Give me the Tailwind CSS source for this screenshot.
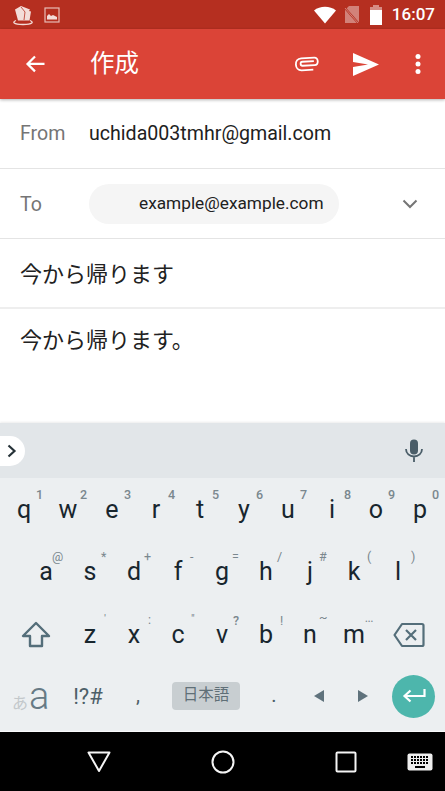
<!DOCTYPE html>
<html lang="ja">
  <head>
    <meta charset="UTF-8" />
    <meta name="viewport" content="width=device-width, initial-scale=1.0" />
    <title>作成</title>
    <script src="https://cdn.jsdelivr.net/npm/@tailwindcss/browser@4"></script>
  </head>
  <body class="overflow-hidden">
    <div class="w-[445px] h-[791px] flex flex-col bg-white font-['Roboto','Noto_Sans_CJK_JP',sans-serif]">
      <!-- status bar -->
      <div class="h-[29px] shrink-0 bg-[#b52f20] flex items-center pl-3 pr-[10px] text-white">
        <svg width="22" height="22" viewBox="0 0 22 22" class="mt-[1px]">
          <path d="M3 5.500L9 2l9 3.500-1 1.500 2 .5-1.500 9H6z" fill="#f3ddd9" />
          <path d="M9 3l4 5-1 8" fill="none" stroke="#b52f20" stroke-width="0.800" />
          <path d="M4 16.500C0 18 1 20.500 11 20.500S22 18 18 16.500" fill="none" stroke="#f3ddd9" stroke-width="1.300" />
        </svg>
        <svg width="16" height="16" viewBox="0 0 16 16" class="ml-[10px]">
          <rect x="1" y="1" width="14" height="14" fill="none" stroke="#e8bdb6" stroke-width="1.200" />
          <path d="M3 12.500V9l2-2 2 2 2-1 2 1 2 1v2.500z" fill="#f3ddd9" />
        </svg>
        <svg width="22" height="18" viewBox="0 0 22 18" class="ml-auto">
          <path d="M0 4.500C6 -0.500 16 -0.500 22 4.500L11 17.500z" fill="#fff" />
        </svg>
        <svg width="16" height="20" viewBox="0 0 16 20" class="ml-[8px]">
          <path d="M5 1h10v17H1V5z" fill="#fff" fill-opacity="0.4" />
          <path d="M0 2l15 17" stroke="#b52f20" stroke-width="2" />
          <path d="M1 3l13 15" stroke="#fff" stroke-opacity="0.4" stroke-width="1" />
        </svg>
        <svg width="14" height="20" viewBox="0 0 14 20" class="ml-[9px]">
          <path d="M4 0h6v2h3v3H1V2h3z" fill="#fff" fill-opacity="0.45" />
          <rect x="1" y="5" width="12" height="15" fill="#fff" />
        </svg>
        <span class="ml-[9px] text-[17px] font-medium leading-none">16:07</span>
      </div>

      <!-- toolbar -->
      <div class="h-[70px] shrink-0 bg-[#db4437] flex items-center text-white shadow-[0_1px_3px_rgba(0,0,0,0.3)] relative">
        <svg width="24" height="24" viewBox="0 0 24 24" class="ml-[23px]">
          <path d="M21.500 11.900H4.500M12 4.500L4.500 11.900l7.500 7.500" fill="none" stroke="#fff" stroke-width="2.200" />
        </svg>
        <span class="ml-[43px] text-[24.500px] leading-none mt-[1px]">作成</span>
        <svg width="26" height="16" viewBox="0 0 26 16" class="ml-auto">
          <path d="M20 5.500H8.500C6 5.500 6 9.500 8.500 9.500H20.500C25 9.500 25 2 20.500 2H7.500C0 2 0 14 7.500 14H19" fill="none" stroke="#fff" stroke-width="1.800" transform="rotate(-3 13 8)" />
        </svg>
        <svg width="26" height="23" viewBox="0 0 26 23" class="ml-[33px]">
          <path d="M0 0l26 11.500L0 23v-9l15-2.500L0 9z" fill="#fff" />
        </svg>
        <svg width="8" height="22" viewBox="0 0 8 22" class="ml-[35px] mr-[23px]">
          <circle cx="4" cy="3.500" r="2.500" fill="#fff" />
          <circle cx="4" cy="11" r="2.500" fill="#fff" />
          <circle cx="4" cy="18.500" r="2.500" fill="#fff" />
        </svg>
      </div>

      <!-- form -->
      <div class="h-[70px] shrink-0 flex items-center pt-[1px] border-b border-[#e4e4e4]">
        <span class="w-[89px] pl-5 text-[19.600px] text-[#757575]">From</span>
        <span class="text-[19.600px] text-[#212121]">uchida003tmhr@gmail.com</span>
      </div>
      <div class="h-[70px] shrink-0 flex items-center border-b border-[#e4e4e4]">
        <span class="w-[89px] pl-5 text-[19.600px] text-[#757575] mt-[2px]">To</span>
        <div class="w-[250px] h-10 rounded-full bg-[#f5f5f5] flex items-center pl-[50px] text-[17.250px] text-[#212121]">example@example.com</div>
        <svg width="16" height="10" viewBox="0 0 16 10" class="ml-[63px]">
          <path d="M1.500 1.500L8 8l6.500-6.500" fill="none" stroke="#757575" stroke-width="2" />
        </svg>
      </div>
      <div class="h-[70px] shrink-0 flex items-center pl-5 pt-[2px] text-[22px] text-[#212121] border-b-2 border-[#eeeeee]">今から帰ります</div>
      <div class="h-[114px] shrink-0 pl-5 pt-[16px] text-[22px] leading-[32px] text-[#212121]">今から帰ります。</div>

      <!-- keyboard -->
      <div class="h-[55px] shrink-0 bg-[#e2e6e9] flex items-center justify-between shadow-[0_-1px_2px_rgba(0,0,0,0.08)]">
        <div class="w-[25px] h-[30px] bg-white rounded-r-[15px] flex items-center justify-center">
          <svg width="10" height="14" viewBox="0 0 10 14" class="mr-[1px]">
            <path d="M1.500 1.500L7.500 7l-6 5.500" fill="none" stroke="#263238" stroke-width="2.200" />
          </svg>
        </div>
        <svg width="18" height="24" viewBox="0 0 18 24" class="mr-[22px]">
          <rect x="5" y="0.500" width="8" height="15" rx="4" fill="#4a5d68" />
          <path d="M1 10c0 4.500 3.500 7.500 8 7.500s8-3 8-7.500M9 17.500V23" fill="none" stroke="#4a5d68" stroke-width="1.800" />
        </svg>
      </div>
      <div class="flex-1 bg-[#eceff1] border-b border-white/70 flex flex-col text-[#18262e] text-[25px]">
        <div class="h-[63px] grid grid-cols-[repeat(10,44px)] pl-[2px] items-center">
          <div class="relative text-center">q<span class="absolute left-[34px] -top-[5px] text-[12.500px] font-medium text-[#7a878e]">1</span></div>
          <div class="relative text-center">w<span class="absolute left-[34px] -top-[5px] text-[12.500px] font-medium text-[#7a878e]">2</span></div>
          <div class="relative text-center">e<span class="absolute left-[34px] -top-[5px] text-[12.500px] font-medium text-[#7a878e]">3</span></div>
          <div class="relative text-center">r<span class="absolute left-[34px] -top-[5px] text-[12.500px] font-medium text-[#7a878e]">4</span></div>
          <div class="relative text-center">t<span class="absolute left-[34px] -top-[5px] text-[12.500px] font-medium text-[#7a878e]">5</span></div>
          <div class="relative text-center">y<span class="absolute left-[34px] -top-[5px] text-[12.500px] font-medium text-[#7a878e]">6</span></div>
          <div class="relative text-center">u<span class="absolute left-[34px] -top-[5px] text-[12.500px] font-medium text-[#7a878e]">7</span></div>
          <div class="relative text-center">i<span class="absolute left-[34px] -top-[5px] text-[12.500px] font-medium text-[#7a878e]">8</span></div>
          <div class="relative text-center">o<span class="absolute left-[34px] -top-[5px] text-[12.500px] font-medium text-[#7a878e]">9</span></div>
          <div class="relative text-center">p<span class="absolute left-[34px] -top-[5px] text-[12.500px] font-medium text-[#7a878e]">0</span></div>
        </div>
        <div class="h-[62px] grid grid-cols-[repeat(9,44px)] pl-[24px] items-center">
          <div class="relative text-center">a<span class="absolute left-[28px] -top-[5px] text-[12.500px] text-[#7a878e]">@</span></div>
          <div class="relative text-center">s<span class="absolute left-[33px] -top-[5px] text-[12.500px] text-[#7a878e]">*</span></div>
          <div class="relative text-center">d<span class="absolute left-[32px] -top-[5px] text-[12.500px] text-[#7a878e]">+</span></div>
          <div class="relative text-center">f<span class="absolute left-[34px] -top-[5px] text-[12.500px] text-[#7a878e]">-</span></div>
          <div class="relative text-center">g<span class="absolute left-[32px] -top-[5px] text-[12.500px] text-[#7a878e]">=</span></div>
          <div class="relative text-center">h<span class="absolute left-[33px] -top-[5px] text-[12.500px] text-[#7a878e]">/</span></div>
          <div class="relative text-center">j<span class="absolute left-[31px] -top-[5px] text-[12.500px] text-[#7a878e]">#</span></div>
          <div class="relative text-center">k<span class="absolute left-[35px] -top-[5px] text-[12.500px] text-[#7a878e]">(</span></div>
          <div class="relative text-center">l<span class="absolute left-[35px] -top-[5px] text-[12.500px] text-[#7a878e]">)</span></div>
        </div>
        <div class="h-[64px] flex items-center">
          <div class="w-[68px] flex justify-center pl-1">
            <svg width="30" height="28" viewBox="0 0 30 28">
              <path d="M15 2L2 15h7v10h12V15h7z" fill="none" stroke="#546e7a" stroke-width="2.400" stroke-linejoin="round" />
            </svg>
          </div>
          <div class="grid grid-cols-[repeat(7,44px)]">
            <div class="relative text-center">z<span class="absolute left-[36px] -top-[6px] text-[11.500px] text-[#7a878e]">'</span></div>
            <div class="relative text-center">x<span class="absolute left-[36px] -top-[5px] text-[12.500px] text-[#7a878e]">:</span></div>
            <div class="relative text-center">c<span class="absolute left-[35px] -top-[6px] text-[11.500px] text-[#7a878e]">"</span></div>
            <div class="relative text-center">v<span class="absolute left-[33px] -top-[4px] text-[12.500px] font-medium text-[#7a878e]">?</span></div>
            <div class="relative text-center">b<span class="absolute left-[36px] -top-[4px] text-[12.500px] text-[#7a878e]">!</span></div>
            <div class="relative text-center">n<span class="absolute left-[31px] -top-[4px] text-[12.500px] leading-none text-[#7a878e]">~</span></div>
            <div class="relative text-center">m<span class="absolute left-[33px] -top-[2px] text-[10px] leading-none font-medium text-[#7a878e]">...</span></div>
          </div>
          <div class="w-[69px] flex justify-center pr-[3px]">
            <svg width="32" height="26" viewBox="0 0 32 26">
              <path d="M9 2h20a1.500 1.500 0 0 1 1.500 1.500v19A1.500 1.500 0 0 1 29 24H9L1.500 13z" fill="none" stroke="#546e7a" stroke-width="2.200" stroke-linejoin="round" />
              <path d="M13 8l10 10M23 8L13 18" fill="none" stroke="#546e7a" stroke-width="2.200" />
            </svg>
          </div>
        </div>
        <div class="h-[58px] flex items-center text-[#546e7a]">
          <div class="w-[62px] pl-3 flex items-baseline">
            <span class="text-[16px] text-[#c3c8cb]">あ</span>
            <span class="text-[38px] ml-[1px] font-light leading-none text-[#667a85]">a</span>
          </div>
          <div class="w-[44px] ml-[4px] text-center text-[22px] text-[#4d5f68]">!?#</div>
          <div class="w-[44px] ml-[6px] text-center text-[20px] text-[#4d5f68] -mt-[2px]">,</div>
          <div class="w-[68px] h-[28px] ml-[12px] rounded-[4px] bg-[#c8ced1] flex items-center justify-center text-[15.500px] text-[#5f6f77]">日本語</div>
          <div class="w-[44px] ml-[12px] text-center text-[20px] text-[#4d5f68] -mt-[2px]">.</div>
          <svg width="10" height="12" viewBox="0 0 10 12" class="ml-[18px]"><path d="M10 0v12L0 6z" fill="#5f727c" /></svg>
          <svg width="10" height="12" viewBox="0 0 10 12" class="ml-[34px]"><path d="M0 0v12l10-6z" fill="#5f727c" /></svg>
          <div class="w-[43px] h-[43px] ml-[24px] rounded-full bg-[#4db6ac] flex items-center justify-center">
            <svg width="24" height="16" viewBox="0 0 24 16">
              <path d="M22.500 1v7H3M8.500 2.500L2.500 8l6 5.500" fill="none" stroke="#fff" stroke-width="2.200" />
            </svg>
          </div>
        </div>
      </div>

      <!-- nav bar -->
      <div class="h-[59px] shrink-0 bg-black flex items-center">
        <svg width="24" height="22" viewBox="0 0 24 22" class="ml-[87px]">
          <path d="M1.500 1.500h21L12 20z" fill="none" stroke="#f5f5f5" stroke-width="2" stroke-linejoin="round" />
        </svg>
        <svg width="24" height="24" viewBox="0 0 24 24" class="ml-[100px]">
          <circle cx="12" cy="12" r="10.500" fill="none" stroke="#f5f5f5" stroke-width="2" />
        </svg>
        <svg width="22" height="22" viewBox="0 0 22 22" class="ml-[100px]">
          <rect x="1.500" y="1.500" width="19" height="19" rx="1" fill="none" stroke="#f5f5f5" stroke-width="2" />
        </svg>
        <svg width="26" height="18" viewBox="0 0 26 18" class="ml-[50px]">
          <rect x="0.500" y="0.500" width="25" height="17" rx="2" fill="#eeeeee" />
          <path d="M4 4h18M4 7h18M4 10h18" stroke="#000" stroke-width="2" stroke-dasharray="2 1" />
          <rect x="8" y="13" width="10" height="2" fill="#000" />
        </svg>
      </div>
    </div>
  </body>
</html>
